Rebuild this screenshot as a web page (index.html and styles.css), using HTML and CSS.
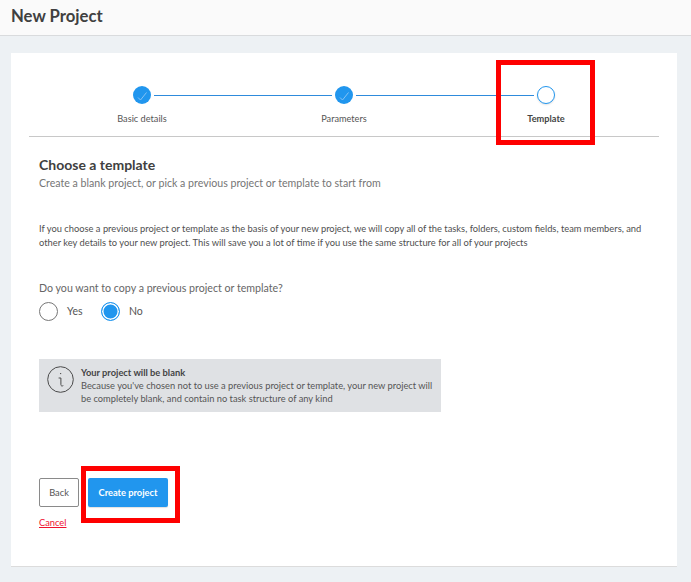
FILE: index.html
```html
<!DOCTYPE html>
<html lang="en">
<head>
<meta charset="utf-8">
<title>New Project</title>
<link rel="stylesheet" href="styles.css">
</head>
<body>
<header class="topbar"><h1 class="page-title">New Project</h1></header>
<main class="card">
  <div class="stepper">
    <div class="track">
      <span class="dot done"><svg viewBox="0 0 18 18" class="tick"><path d="M5 11.5l2.5 2.5L13.5 6.5"/></svg></span>
      <span class="line"></span>
      <span class="dot done"><svg viewBox="0 0 18 18" class="tick"><path d="M5 11.5l2.5 2.5L13.5 6.5"/></svg></span>
      <span class="line"></span>
      <span class="dot current"></span>
    </div>
    <div class="labels">
      <span class="label">Basic details</span>
      <span class="label">Parameters</span>
      <span class="label active">Template</span>
    </div>
  </div>
  <section class="content">
    <h2 class="heading">Choose a template</h2>
    <p class="sub">Create a blank project, or pick a previous project or template to start from</p>
    <p class="desc">If you choose a previous project or template as the basis of your new project, we will copy all of the tasks, folders, custom fields, team members, and other key details to your new project. This will save you a lot of time if you use the same structure for all of your projects</p>
    <p class="question">Do you want to copy a previous project or template?</p>
    <div class="radios">
      <span class="radio"></span><span class="radio-text">Yes</span>
      <span class="radio on"></span><span class="radio-text">No</span>
    </div>
    <div class="notice">
      <svg class="info" viewBox="0 0 27 27"><circle cx="13.5" cy="13.5" r="12.8"/><path d="M13 7.6h1.2M11.6 12h2.3v6.6c0 1.4 1 1.7 2.4 1"/></svg>
      <div class="notice-body">
        <div class="notice-title">Your project will be blank</div>
        <div class="notice-text">Because you've chosen not to use a previous project or template, your new project will be completely blank, and contain no task structure of any kind</div>
      </div>
    </div>
    <div class="actions">
      <button class="btn back">Back</button>
      <button class="btn create">Create project</button>
    </div>
    <a class="cancel" href="#">Cancel</a>
  </section>
</main>
<div class="mark mark-template"></div>
<div class="mark mark-create"></div>
</body>
</html>
```
FILE: styles.css
```css
* { box-sizing: border-box; }
html, body { margin: 0; padding: 0; }
body {
  width: 691px;
  height: 582px;
  overflow: hidden;
  background: #edf1f4;
  font-family: Lato, "Liberation Sans", sans-serif;
  color: #4a4a4a;
  position: relative;
}
.topbar {
  height: 36px;
  background: #fafafa;
  border-bottom: 1px solid #d9dbdd;
  padding: 0 11px 4px;
  display: flex;
  align-items: center;
}
.page-title { margin: 0; font-size: 16.7px; font-weight: 700; color: #404040; }
.card {
  margin: 17px 14px 0 11px;
  height: 514px;
  background: #fff;
  border-bottom: 1px solid #dcdcdc;
  padding: 33px 18px 0;
}
.stepper { border-bottom: 1px solid #c8c8c8; height: 51px; padding: 0 12px; }
.track { display: flex; align-items: center; justify-content: center; height: 18px; }
.dot { width: 18px; height: 18px; border-radius: 50%; flex: none; display: block; }
.dot.done { background: #2196ee; }
.dot.current { background: #fff; border: 1px solid #2196ee; box-shadow: 0 1px 2px rgba(0,0,0,.12); }
.tick { display: block; width: 18px; height: 18px; fill: none; stroke: #86c3f5; stroke-width: 1; }
.line { width: 178px; height: 1px; margin: 0 3px; background: #2e8bdc; flex: none; }
.labels { display: flex; margin-top: 9px; }
.label { width: 202px; text-align: center; font-size: 9.2px; line-height: 12px; color: #555; }
.label.active { color: #444; font-weight: 700; }
.content { padding: 0 10px; }
.heading { margin: 19px 0 0; font-size: 14px; line-height: 18px; font-weight: 700; color: #404040; }
.sub { margin: 2px 0 0; font-size: 10.62px; line-height: 14px; color: #757575; }
.desc { margin: 32px 0 0; font-size: 9.33px; line-height: 14px; color: #4f4f4f; width: 610px; }
.question { margin: 31px 0 0; font-size: 10.65px; line-height: 14px; color: #666; }
.radios { display: flex; align-items: center; margin-top: 6px; height: 20px; }
.radio { width: 19px; height: 19px; border-radius: 50%; border: 1px solid #777; background: #fff; flex: none; }
.radio.on { border: 1px solid #2196ee; background: #2196ee; box-shadow: inset 0 0 0 1.5px #fff; }
.radio-text { font-size: 10.5px; color: #555; margin: 0 18px 0 9px; width: 16px; }
.notice {
  margin-top: 38px;
  width: 402px;
  height: 53px;
  background: #dfe1e4;
  display: flex;
  padding: 7px 8px;
  gap: 7px;
}
.info { width: 27px; height: 27px; flex: none; fill: none; stroke: #4a4a4a; stroke-width: 1; }
.notice-title { font-size: 9.3px; line-height: 13px; font-weight: 700; color: #444; }
.notice-text { font-size: 9.3px; line-height: 13px; color: #555; }
.actions { display: flex; gap: 9px; margin-top: 66px; }
.btn { height: 29px; border-radius: 2px; font-family: inherit; font-size: 9.3px; padding: 0; }
.back { width: 40px; background: #fff; border: 1px solid #8a8a8a; color: #555; }
.create { width: 80px; background: #2196ee; border: 0; color: #fff; font-weight: 700; box-shadow: 0 1px 1px rgba(0,0,0,.12); }
.cancel { display: inline-block; margin-top: 10px; font-size: 9.3px; line-height: 12px; color: #f0102f; }
.mark { position: absolute; border: 5px solid #fe0000; }
.mark-template { left: 496px; top: 60px; width: 99px; height: 85px; }
.mark-create { left: 81px; top: 466px; width: 99px; height: 57px; }
```
